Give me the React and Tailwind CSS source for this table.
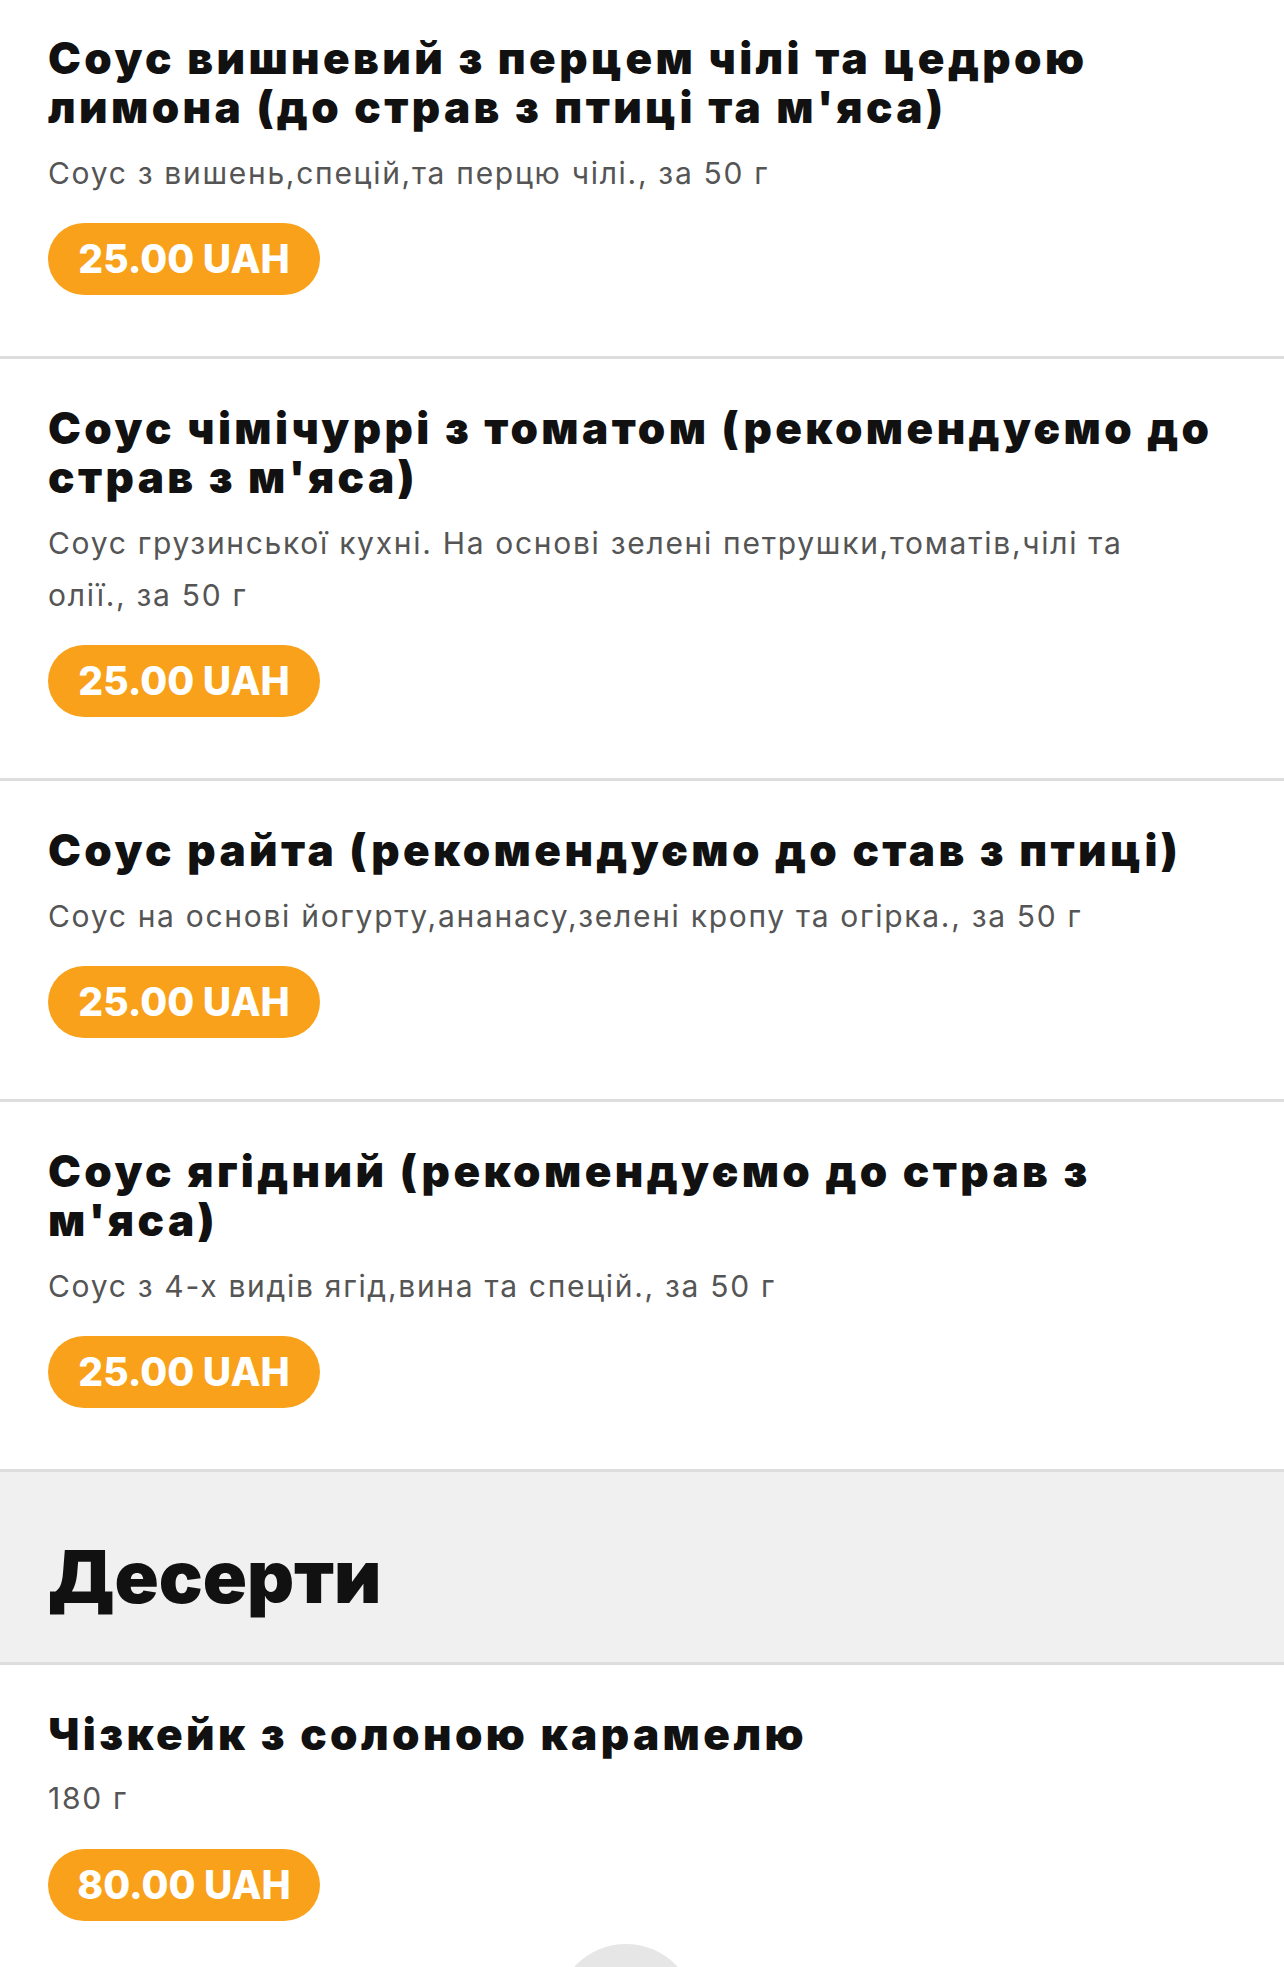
import React from "react";

const sauces = [
    {
        title: "Соус вишневий з перцем чілі та цедрою лимона (до страв з птиці та м'яса)",
        desc: "Соус з вишень,спецій,та перцю чілі., за 50 г",
        price: "25.00 UAH",
    },
    {
        title: "Соус чімічуррі з томатом (рекомендуємо до страв з м'яса)",
        desc: "Соус грузинської кухні. На основі зелені петрушки,томатів,чілі та олії., за 50 г",
        price: "25.00 UAH",
    },
    {
        title: "Соус райта (рекомендуємо до став з птиці)",
        desc: "Соус на основі йогурту,ананасу,зелені кропу та огірка., за 50 г",
        price: "25.00 UAH",
    },
    {
        title: "Соус ягідний (рекомендуємо до страв з м'яса)",
        desc: "Соус з 4-х видів ягід,вина та спецій., за 50 г",
        price: "25.00 UAH",
    },
];

const MenuItem = ({ item, first, last }) => (
    <div className={`px-[48px] ${first ? "pt-[34px]" : "pt-[45px]"} pb-[61px] ${last ? "" : "border-b-[3px] border-[#dddddd]"}`}>
        <h3 className="text-[44px] leading-[49px] font-black text-[#111111] tracking-[3.4px]">
            {item.title}
        </h3>
        <p className="mt-[15px] text-[30px] leading-[52px] text-[#555555] tracking-[1.7px] pr-[100px]">{item.desc}</p>
        <div className="mt-[24px] h-[72px] w-[272px] rounded-full bg-[#f9a11b] flex items-center justify-center">
            <span className="text-white text-[39px] font-extrabold">{item.price}</span>
        </div>
    </div>
);

const App = () => {
    return (
        <div className="h-[1967px] bg-white font-['Inter','Noto_Sans',sans-serif] overflow-hidden">
            {sauces.map((item, index) => (
                <MenuItem key={index} item={item} first={index === 0} last={index === sauces.length - 1} />
            ))}

            {/* section header */}
            <div className="bg-[#f0f0f0] border-y-[3px] border-[#dddddd] px-[48px] pt-[65px] pb-[45px]">
                <h2 className="text-[73px] leading-[80px] font-black text-[#111111]">Десерти</h2>
            </div>

            <div className="px-[48px] pt-[45px]">
                <h3 className="text-[44px] leading-[49px] font-black text-[#111111] tracking-[3.4px]">
                    Чізкейк з солоною карамелю
                </h3>
                <p className="mt-[13px] text-[30px] leading-[52px] text-[#555555] tracking-[1.7px]">180 г</p>
                <div className="mt-[25px] h-[72px] w-[272px] rounded-full bg-[#f9a11b] flex items-center justify-center">
                    <span className="text-white text-[39px] font-extrabold">80.00 UAH</span>
                </div>
            </div>

            {/* scroll-to-top button, cut off by the screen edge */}
            <div className="ml-[556px] mt-[23px] w-[140px] h-[140px] rounded-full bg-[#e6e6e6]"></div>
        </div>
    );
};

export default App;
